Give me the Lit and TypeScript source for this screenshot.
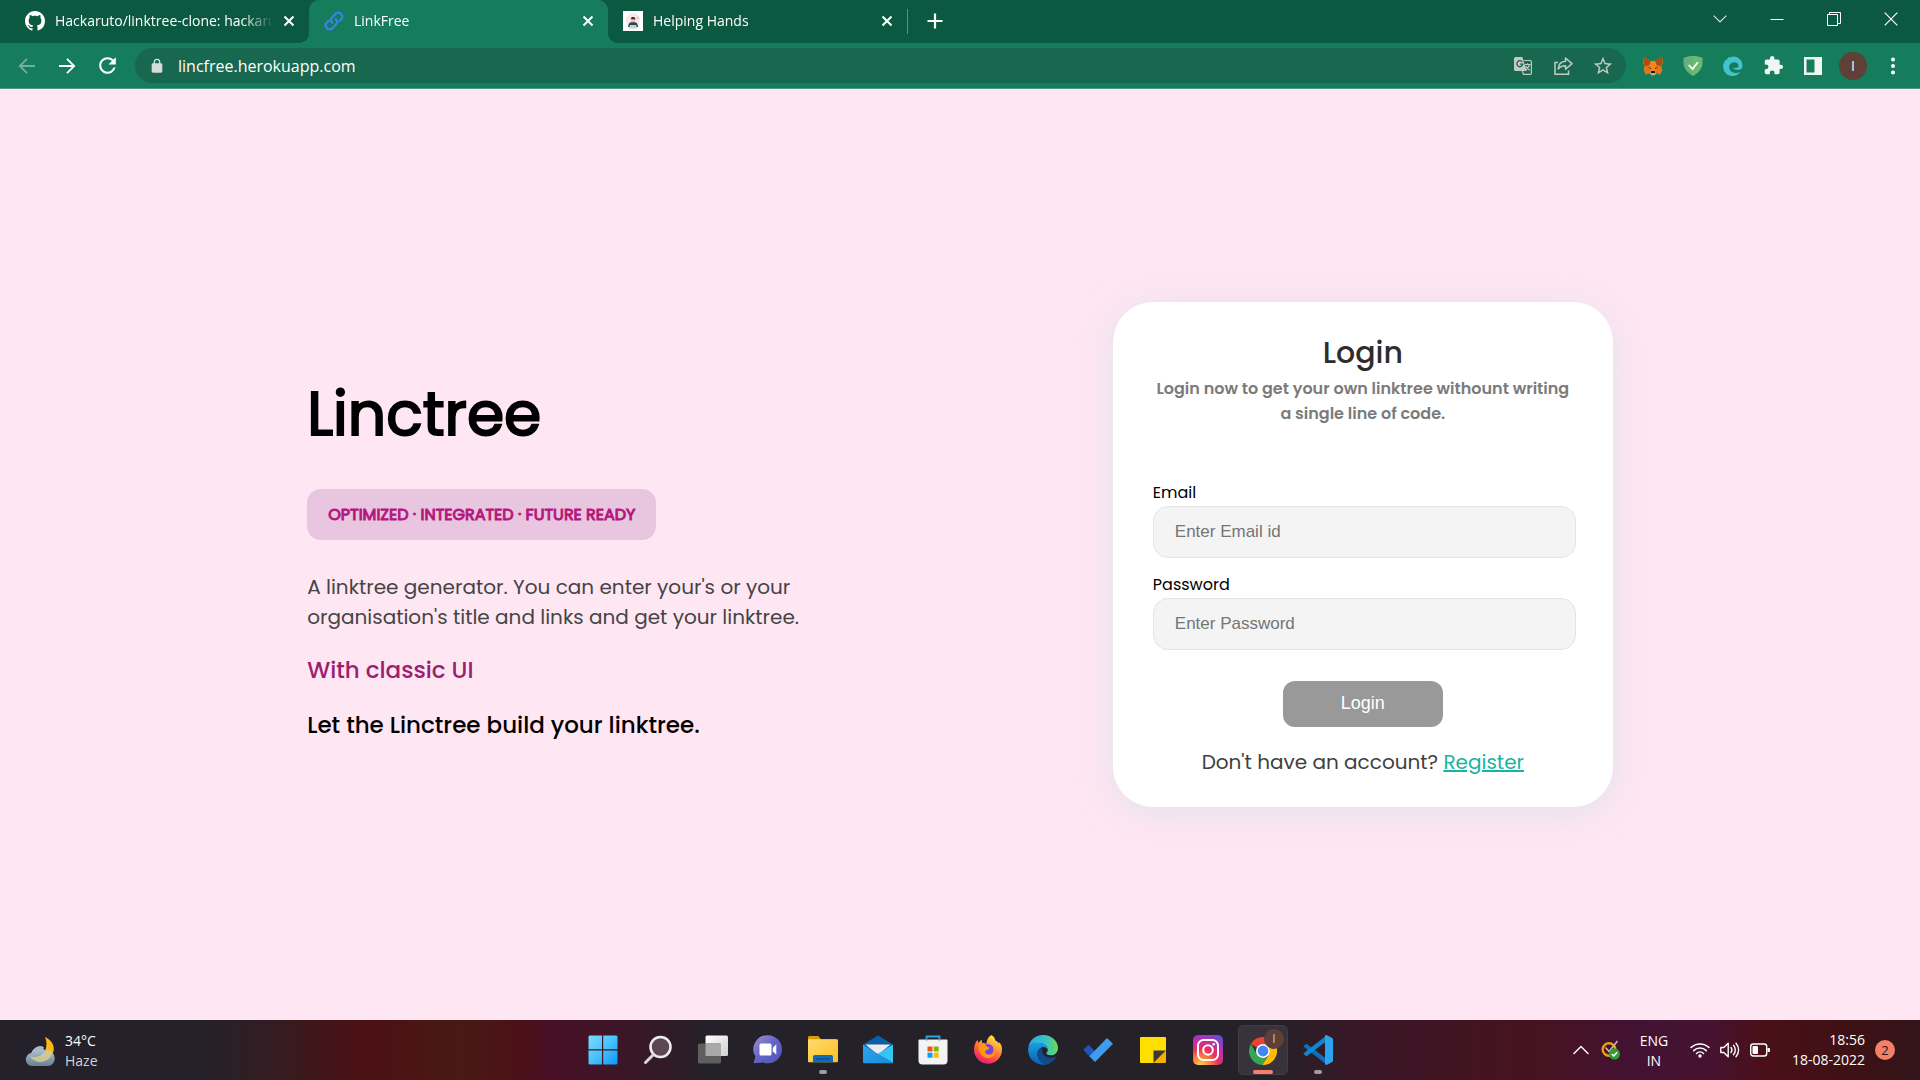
import { LitElement, html, svg, css, nothing, type TemplateResult } from "lit";
import { customElement, property } from "lit/decorators.js";
import { classMap } from "lit/directives/class-map.js";

const icon = (size: number, box: string, body: TemplateResult) =>
  html`<svg width=${size} height=${size} viewBox=${box} fill="none" aria-hidden="true">${body}</svg>`;

const controlReset = css`
  * {
    box-sizing: border-box;
  }
  button {
    display: flex;
    align-items: center;
    justify-content: center;
    margin: 0;
    padding: 0;
    border: 0;
    background: none;
    color: inherit;
    font: inherit;
  }
  svg {
    display: block;
    flex: none;
  }
`;

/* ---------- browser glyphs ---------- */

const githubIcon = icon(20, "0 0 16 16", svg`<path fill="#fff" d="M8 0C3.58 0 0 3.58 0 8c0 3.54 2.29 6.53 5.47 7.59.4.07.55-.17.55-.38 0-.19-.01-.82-.01-1.49-2.01.37-2.53-.49-2.69-.94-.09-.23-.48-.94-.82-1.13-.28-.15-.68-.52-.01-.53.63-.01 1.08.58 1.23.82.72 1.21 1.87.87 2.33.66.07-.52.28-.87.51-1.07-1.78-.2-3.64-.89-3.64-3.95 0-.87.31-1.59.82-2.15-.08-.2-.36-1.02.08-2.12 0 0 .67-.21 2.2.82.64-.18 1.32-.27 2-.27s1.36.09 2 .27c1.53-1.04 2.2-.82 2.2-.82.44 1.1.16 1.92.08 2.12.51.56.82 1.27.82 2.15 0 3.07-1.87 3.75-3.65 3.95.29.25.54.73.54 1.48 0 1.07-.01 1.93-.01 2.2 0 .21.15.46.55.38A8.01 8.01 0 0 0 16 8c0-4.42-3.58-8-8-8z"/>`);

const linkIcon = icon(20, "0 0 20 20", svg`<g stroke="#3b82e6" stroke-width="2.200" stroke-linecap="round" stroke-linejoin="round"><path d="M8.2 11.8a4 4 0 0 1 0-5.6l3.7-3.7a4 4 0 0 1 5.6 5.6l-2.2 2.2"/><path d="M11.8 8.2a4 4 0 0 1 0 5.6l-3.7 3.7a4 4 0 0 1-5.6-5.6l2.200-2.200"/></g>`);

const handsIcon = icon(20, "0 0 20 20", svg`<path fill="#fff" d="M0 0h20v20H0z"/><circle cx="10" cy="9" r="7" fill="#fbe6e4"/><path fill="#f2b9a6" d="M8.3 8h3.6v3.6H8.3z"/><path fill="#2b2b33" d="M7.8 8.6c0-2 1-2.6 2.3-2.6s2.3.7 2.2 2.4L8.6 8z"/><path fill="#264653" d="M5 16c.2-3 1.600-4.800 3.400-4.800h3.300c1.900 0 3.200 1.900 3.400 4.800h-2.300v-2H7.300v2z"/><path fill="#c9cfd6" d="M6.800 14h6.500l.5 3.600H6.200z"/><circle cx="14.500" cy="7" r=".8" fill="#a8b4c0"/>`);

const crossIcon = icon(12, "0 0 12 12", svg`<path stroke="#fff" stroke-width="2" d="m1.500 1.500 9 9m0-9-9 9"/>`);
const plusIcon = icon(16, "0 0 16 16", svg`<path stroke="#fff" stroke-width="2.200" d="M8 .5v15M.5 8h15"/>`);
const backIcon = icon(20, "0 0 20 20", svg`<path stroke="#73b09c" stroke-width="1.800" d="M18 10H3m7-7.200L2.800 10l7.200 7.200"/>`);
const forwardIcon = icon(20, "0 0 20 20", svg`<path stroke="#fff" stroke-width="1.800" d="M2 10h15m-7-7.200 7.200 7.200-7.200 7.200"/>`);
const reloadIcon = icon(25, "0 0 24 24", svg`<path fill="#fff" d="M17.650 6.350A7.950 7.950 0 0 0 12 4a8 8 0 1 0 7.730 10h-2.080A6 6 0 1 1 12 6c1.660 0 3.140.69 4.220 1.780L13 11h7V4z"/>`);
const lockIcon = icon(16, "0 0 24 24", svg`<path fill="#d5dcda" fill-rule="evenodd" d="M18 8h-1V6A5 5 0 0 0 7 6v2H6a2 2 0 0 0-2 2v10c0 1.100.9 2 2 2h12a2 2 0 0 0 2-2V10a2 2 0 0 0-2-2zM9 6a3 3 0 0 1 6 0v2H9z"/>`);

const translateIcon = icon(18, "0 0 18 18", svg`<path fill="#c3cac6" d="M1.500 0h6.800l4.500 14H1.500A1.500 1.500 0 0 1 0 12.500v-11A1.500 1.500 0 0 1 1.500 0z"/><path stroke="#18684f" stroke-width="1.300" d="M8.300 5A3 3 0 1 0 8.800 7.200H6"/><path stroke="#c3cac6" stroke-width="1.200" d="M10 3.500h6.300c.6 0 1.100.5 1.100 1.100v11.700c0 .6-.5 1.100-1.100 1.100H9.500L8.300 14M10.700 7.500h5.800M13.500 6.300v1.200m2 0c-.5 2.500-2 4.300-4 5.300m.3-3.800c.8 1.800 2 3 4 4.200"/>`);
const shareIcon = icon(19, "0 0 19 19", svg`<path stroke="#c3cac6" stroke-width="1.500" d="M4 6.500H1v11.700h13.500V14.500"/><path stroke="#c3cac6" stroke-width="1.500" stroke-linejoin="round" d="M11.500 2v3.300C7 5.500 4.500 8.500 4.200 13c1.800-2.400 4-3.400 7.300-3.300v3.500L18 7.600z"/>`);
const starIcon = icon(22, "0 0 24 24", svg`<path fill="#c3cac6" d="m22 9.240-7.190-.62L12 2 9.190 8.630 2 9.240l5.460 4.730L5.820 21 12 17.270 18.180 21l-1.630-7.030zM12 15.400l-3.760 2.270 1-4.280-3.320-2.880 4.380-.38L12 6.100l1.710 4.040 4.380.38-3.320 2.880 1 4.280z"/>`);

const foxIcon = icon(20, "0 0 20 20", svg`<path fill="#e2761b" d="M.8.8 8 5h4L19.200.8l.6 6-1.300 4 .9 3.300-2 4.400-4-.9-2 1.400H8.600l-2-1.400-4 .9-2-4.400.9-3.300-1.300-4z"/><path fill="#a94f16" d="M.8.8 8 5 6.400 9.300l-4.900.9-.6-3.500zM19.200.8 12 5l1.600 4.300 4.900.9.6-3.500z"/><path fill="#f6851b" d="m6.400 9.300 1.600-4.300h4l1.600 4.300-.8 3.500-.8 3H8l-.8-3z"/><path fill="#233447" d="m4.800 11.200 3 .5.300 1.500zM15.200 11.200l-3 .5-.3 1.500z"/><path fill="#c0ad9e" d="M7.600 15.300h4.800l.4 2.500-1.400 1.400H8.600l-1.400-1.400z"/><path fill="#161616" d="M8.300 15h3.400l.5 2H7.800z"/>`);
const guardIcon = icon(20, "0 0 20 20", svg`<path fill="#68bc71" d="M10 0c3 0 6.500.6 9.500 2v4.600C19.500 12 16 17 10 20z"/><path fill="#67b279" d="M10 0C7 0 3.500.6.5 2v4.600C.5 12 4 17 10 20z"/><path stroke="#fff" stroke-width="1.800" d="m5.800 9 3.700 4 5.300-6.800"/>`);
const swirlIcon = icon(20, "0 0 20 20", svg`<path fill="#42c3cd" d="M2 4.500 4.500 3 5 1.200l2 .2C12-1 18.800 2 19.500 9c.2 2-.5 3.400-1.700 4.200-2.600 1.700-6.800.5-8.800-1.700 2.800 1 5 .4 6.400-.6.6-3-1.700-4.700-4.400-4.600-3 .1-5 2.400-4.800 5.200.3 3.400 3.200 5.600 6.800 5.400 2-.2 3.200-.7 4.500-1.500-2 3.300-5 4.600-8.300 4.500C4.300 19.700.5 16 .3 11.400-.1 9.500.2 7.800 1 6.400z"/><path fill="#14795a" d="M8.500 10.200c1.300-1.700 3.500-2.200 5.300-1.300.5.300.7.900.3 1.200-1.300.9-3.700 1.200-5.600.1z"/>`);
const puzzleIcon = icon(21, "0 0 24 24", svg`<path fill="#f1f5f4" d="M20.500 11H19V7a2 2 0 0 0-2-2h-4V3.500a2.500 2.500 0 0 0-5 0V5H4a2 2 0 0 0-2 2v3.800h1.500a2.700 2.700 0 0 1 0 5.400H2V20c0 1.100.9 2 2 2h3.800v-1.500a2.700 2.700 0 0 1 5.400 0V22H17a2 2 0 0 0 2-2v-4h1.500a2.500 2.500 0 0 0 0-5z"/>`);
const panelIcon = icon(18, "0 0 18 18", svg`<path fill="#f1f5f4" fill-rule="evenodd" d="M0 0h18v18H0zm2.500 2.500v13h8v-13z"/>`);
const dotsIcon = icon(18, "0 0 18 18", svg`<g fill="#fff"><circle cx="9" cy="2.500" r="2"/><circle cx="9" cy="9" r="2"/><circle cx="9" cy="15.500" r="2"/></g>`);

const chevronDown = icon(14, "0 0 14 14", svg`<path stroke="#d7e4df" stroke-width="1.200" d="M.7 3.700 7 10l6.300-6.300"/>`);
const minimizeIcon = icon(14, "0 0 14 14", svg`<path stroke="#fff" d="M.5 7.500h13"/>`);
const restoreIcon = icon(14, "0 0 14 14", svg`<path stroke="#fff" d="M.5 2.500h10v11H.5zM2.500 2.500v-2h11v11h-3"/>`);
const windowClose = icon(14, "0 0 14 14", svg`<path stroke="#fff" stroke-width="1.200" d="m.7.700 12.600 12.600m0-12.600L.7 13.300"/>`);

interface Tab {
  title: string;
  glyph: TemplateResult;
  active?: boolean;
}

@customElement("browser-chrome")
export class BrowserChrome extends LitElement {
  private tabs: Tab[] = [
    { title: "Hackaruto/linktree-clone: hackaruto", glyph: githubIcon },
    { title: "LinkFree", glyph: linkIcon, active: true },
    { title: "Helping Hands", glyph: handsIcon },
  ];

  static styles = [
    controlReset,
    css`
      :host {
        display: block;
        color: #fff;
        background: #157c5c;
        border-bottom: 1px solid #4d9b83;
        font-family: "Segoe UI", "Open Sans", sans-serif;
      }
      .strip {
        display: flex;
        height: 43px;
        padding-left: 10px;
        background: #0b5940;
      }
      .tab {
        position: relative;
        display: flex;
        align-items: center;
        flex: 0 1 299px;
        min-width: 0;
        padding: 0 10px 2px 15px;
      }
      .tab.active {
        background: #157c5c;
        border-radius: 10px 10px 0 0;
      }
      .tab.active::before,
      .tab.active::after {
        content: "";
        position: absolute;
        bottom: 0;
        width: 10px;
        height: 10px;
      }
      .tab.active::before {
        right: 100%;
        background: radial-gradient(circle at 0 0, transparent 10px, #157c5c 10px);
      }
      .tab.active::after {
        left: 100%;
        background: radial-gradient(circle at 100% 0, transparent 10px, #157c5c 10px);
      }
      .pick {
        flex: 1;
        min-width: 0;
        gap: 10px;
        justify-content: flex-start;
      }
      .title {
        flex: 1;
        min-width: 0;
        overflow: hidden;
        white-space: nowrap;
        text-align: left;
        font-size: 14px;
        line-height: 20px;
        mask-image: linear-gradient(to right, #000 calc(100% - 32px), transparent);
      }
      .shut {
        width: 20px;
        height: 20px;
        margin-left: 5px;
      }
      .new {
        width: 54px;
        padding-bottom: 2px;
      }
      .rule {
        width: 1px;
        height: 25px;
        margin-top: 9px;
        background: #5d9180;
      }
      .windows {
        display: flex;
        margin-left: auto;
        padding-right: 1px;
      }
      .windows button {
        width: 57px;
        height: 37px;
      }
      .bar {
        display: flex;
        align-items: center;
        height: 45px;
        padding: 0 7px 0 7px;
      }
      .bar button {
        flex: none;
        width: 40px;
        height: 36px;
      }
      .address {
        display: flex;
        align-items: center;
        flex: 1;
        height: 35px;
        margin: 0 7px 0 8px;
        padding: 0 3px 0 14px;
        border-radius: 18px;
        background: #18684f;
      }
      .address input {
        flex: 1;
        min-width: 0;
        margin-left: 13px;
        padding: 0;
        border: 0;
        outline: 0;
        background: none;
        color: #fff;
        font: inherit;
        font-size: 16px;
      }
      .avatar {
        display: grid;
        place-items: center;
        width: 28px;
        height: 28px;
        border-radius: 50%;
        background: #5d4037;
        font-size: 14px;
      }
    `,
  ];

  render() {
    return html`
      <div class="strip">
        ${this.tabs.map(
          (tab) => html`
            <div class=${classMap({ tab: true, active: !!tab.active })}>
              <button class="pick">${tab.glyph}<span class="title">${tab.title}</span></button>
              <button class="shut" aria-label="Close tab">${crossIcon}</button>
            </div>
          `
        )}
        <span class="rule"></span>
        <button class="new" aria-label="New tab">${plusIcon}</button>
        <div class="windows">
          <button aria-label="Search tabs">${chevronDown}</button>
          <button aria-label="Minimize">${minimizeIcon}</button>
          <button aria-label="Restore">${restoreIcon}</button>
          <button aria-label="Close">${windowClose}</button>
        </div>
      </div>
      <div class="bar">
        <button aria-label="Back">${backIcon}</button>
        <button aria-label="Forward">${forwardIcon}</button>
        <button aria-label="Reload">${reloadIcon}</button>
        <div class="address">
          ${lockIcon}
          <input type="text" aria-label="Address" .value=${"lincfree.herokuapp.com"} />
          <button aria-label="Translate">${translateIcon}</button>
          <button aria-label="Share">${shareIcon}</button>
          <button aria-label="Bookmark">${starIcon}</button>
        </div>
        <button aria-label="Wallet">${foxIcon}</button>
        <button aria-label="Ad blocker">${guardIcon}</button>
        <button aria-label="Eno">${swirlIcon}</button>
        <button aria-label="Extensions">${puzzleIcon}</button>
        <button aria-label="Side panel">${panelIcon}</button>
        <button aria-label="Profile"><span class="avatar">I</span></button>
        <button aria-label="Menu">${dotsIcon}</button>
      </div>
    `;
  }
}

/* ---------- page ---------- */

@customElement("login-card")
export class LoginCard extends LitElement {
  static styles = css`
    * {
      box-sizing: border-box;
    }
    :host {
      box-sizing: border-box;
      display: block;
      flex: 0 1 500px;
      padding: 28px 40px 30px;
      border-radius: 40px;
      background: #fff;
      box-shadow: 0 5px 35px rgba(196, 226, 232, 0.5);
      text-align: center;
    }
    h2 {
      margin: 0;
      color: #2d2d2d;
      font-size: 30px;
      font-weight: 500;
      line-height: 46px;
    }
    .lead {
      margin: 0 0 54px;
      color: #7b7b7b;
      font-size: 16px;
      font-weight: 600;
      line-height: 25px;
    }
    .field {
      display: flex;
      flex-direction: column;
      margin: 0 -3px 14px 0;
      text-align: left;
    }
    label {
      color: #000;
      font-size: 16px;
      font-weight: 400;
      line-height: 26px;
    }
    input {
      width: 100%;
      height: 52px;
      padding: 0 21px;
      border: 1px solid #e4e4e4;
      border-radius: 15px;
      outline: 0;
      background: #f4f4f4;
      font-family: Arial, "Liberation Sans", sans-serif;
      font-size: 17px;
    }
    input::placeholder {
      color: #757575;
      opacity: 1;
    }
    .submit {
      width: 160px;
      height: 46px;
      margin: 17px auto 20px;
      padding: 0 0 2px;
      border: 0;
      border-radius: 12px;
      background: #999;
      color: #fff;
      font-family: Arial, "Liberation Sans", sans-serif;
      font-size: 18px;
    }
    .more {
      margin: 0;
      color: #404040;
      font-size: 20px;
      font-weight: 400;
      line-height: 30px;
    }
    a {
      color: #1ab3a0;
      text-decoration-thickness: 2px;
    }
  `;

  render() {
    return html`
      <h2>Login</h2>
      <p class="lead">Login now to get your own linktree withount writing a single line of code.</p>
      <form @submit=${(e: Event) => e.preventDefault()}>
        <div class="field">
          <label for="email">Email</label>
          <input id="email" type="email" placeholder="Enter Email id" />
        </div>
        <div class="field">
          <label for="password">Password</label>
          <input id="password" type="password" placeholder="Enter Password" />
        </div>
        <button class="submit">Login</button>
      </form>
      <p class="more">Don't have an account? <a href="#register">Register</a></p>
    `;
  }
}

@customElement("landing-page")
export class LandingPage extends LitElement {
  static styles = css`
    :host {
      display: flex;
      align-items: center;
      justify-content: space-between;
      gap: 40px;
      flex: 1;
      padding: 0 16%;
      background: #ffe6f3;
      font-family: Poppins, Inter, sans-serif;
      font-weight: 400;
    }
    .intro {
      flex: 0 1 500px;
      padding-top: 2px;
    }
    h1 {
      margin: 0 0 29px;
      color: #000;
      font-size: 60px;
      font-weight: 400;
      line-height: 92px;
      -webkit-text-stroke: 2px #000;
    }
    .badge {
      display: inline-block;
      padding: 13px 21px;
      border-radius: 14px;
      background: #e8c6df;
      color: #b5177e;
      font-size: 16px;
      font-weight: 400;
      line-height: 25px;
      -webkit-text-stroke: 1px currentColor;
    }
    .about {
      margin: 32px 0 20px;
      color: #444;
      font-size: 20px;
      line-height: 30px;
    }
    h3 {
      margin: 0 0 19px;
      color: #000;
      font-size: 23px;
      font-weight: 500;
      line-height: 36px;
    }
    h3.accent {
      color: #9c2070;
    }
    h3:last-child {
      margin: 0;
    }
  `;

  render() {
    return html`
      <section class="intro">
        <h1>Linctree</h1>
        <span class="badge">OPTIMIZED · INTEGRATED · FUTURE READY</span>
        <p class="about">A linktree generator. You can enter your's or your organisation's title and links and get your linktree.</p>
        <h3 class="accent">With classic UI</h3>
        <h3>Let the Linctree build your linktree.</h3>
      </section>
      <login-card></login-card>
    `;
  }
}

/* ---------- taskbar ---------- */

const app = (body: TemplateResult) => icon(30, "0 0 30 30", body);

const weatherIcon = app(svg`<defs><linearGradient id="w-cloud" x2="0" y2="1"><stop stop-color="#b9cbdc"/><stop offset="1" stop-color="#6b7f92"/></linearGradient></defs><path fill="#fdb913" d="M20 1c7 3 10.500 9.500 8 16-2.500 6.500-9.500 10-16 8.300-3-.8-5-2.300-7-4.600 7 1.500 13-1 15.400-6.800C22 9.500 21.800 5.500 20 1z"/><path fill="url(#w-cloud)" d="M7 30a6.500 6.500 0 0 1-.8-12.900A8 8 0 0 1 20.500 15c5-1 9.200 2.500 9.200 7.500 0 4-3 7.500-7 7.500z"/><path fill="#d9cf8d" opacity=".8" d="M5 20.500c7 1.500 13-1 15.400-6.100 3-.4 5.600.8 7.200 2.600-2.500 6.500-9 10.500-15.600 8.500-3-.8-5-2.500-7-5z"/><path fill="#a7b9ca" d="M8.500 17A6.500 6.500 0 0 1 19 11.500c-1.500 3.700-5 6-10.500 5.500z"/>`);
const startIcon = app(svg`<defs><linearGradient id="s-blue" x1="0" y1="0" x2="30" y2="30" gradientUnits="userSpaceOnUse"><stop stop-color="#7ddcff"/><stop offset=".5" stop-color="#48c2fb"/><stop offset="1" stop-color="#0a96fa"/></linearGradient></defs><path fill="url(#s-blue)" d="M1.500.5H14v13.700H.5V1.500zM15.200.5h13.300l1 1v12.700H15.200zM.5 15.400H14v14.100H1.500l-1-1zM15.200 15.400h14.300v13.100l-1 1H15.200z"/>`);
const searchIcon = app(svg`<circle cx="17.500" cy="12" r="10" fill="#5b4750" stroke="#ececec" stroke-width="2.600"/><path stroke="#d7d7d7" stroke-width="3" stroke-linecap="round" d="m10 20-7.500 7.500"/>`);
const viewsIcon = app(svg`<defs><linearGradient id="v-front" x2="1" y2="1"><stop stop-color="#fff"/><stop offset="1" stop-color="#d0d0d0"/></linearGradient></defs><rect x="7.500" y=".5" width="22.500" height="20.500" rx="1.500" fill="url(#v-front)"/><rect y="8.500" width="23" height="20" rx="1.500" fill="#5f5f5f"/><path fill="#a9a9a9" d="M7.500 8.500H23V21H7.500z"/>`);
const chatIcon = app(svg`<defs><linearGradient id="c-bg" x2="1" y2="1"><stop stop-color="#a08fd0"/><stop offset=".5" stop-color="#6264c7"/><stop offset="1" stop-color="#4f52b8"/></linearGradient></defs><path fill="url(#c-bg)" d="M15 .3a14 14 0 1 1-5 27.100L1.500 28.300c-.8 0-1-.7-.7-1.200l1.700-5.300A14 14 0 0 1 15 .3z"/><rect x="6.500" y="8.500" width="12" height="12" rx="1.500" fill="#fff"/><path fill="#fff" d="m19.800 12.800 3.500-3.600v10.600l-3.500-3.600z"/>`);
const folderIcon = app(svg`<defs><linearGradient id="f-bg" x2="1" y2="1"><stop stop-color="#ffdb6e"/><stop offset="1" stop-color="#fbbf24"/></linearGradient></defs><path fill="#dd9a06" d="M0 2.500C0 1.700.7 1 1.500 1h8.800l2.700 3.200H28V10H0z"/><rect y="4.300" width="30" height="23" rx="1" fill="url(#f-bg)"/><path fill="#0f6cbd" d="M5 27.300v-5.500C5 20.800 5.800 20 6.800 20h16.400c1 0 1.800.8 1.800 1.800v5.500z"/><path stroke="#0b4a8b" stroke-width="1.200" stroke-linecap="round" d="M8.500 23.800h13"/>`);
const mailIcon = app(svg`<defs><linearGradient id="m-bg" x2="1" y2="1"><stop stop-color="#2ba8ea"/><stop offset="1" stop-color="#1a88dc"/></linearGradient></defs><path fill="#0d5ea8" d="m0 9.500 15-9 15 9-6 4H6z"/><path fill="#ececec" d="M2.500 9.500h25L15 20z"/><path fill="#35c5f4" d="M30 9.500V28L14.500 19z"/><path fill="url(#m-bg)" d="M0 9.500 30 28.300H1.200A1.200 1.200 0 0 1 0 27z"/>`);
const storeIcon = app(svg`<path fill="#f3f3f3" d="M.5 5.500c0-.6.4-1 1-1h27c.6 0 1 .4 1 1v20a4 4 0 0 1-4 4h-21a4 4 0 0 1-4-4z"/><path stroke="#2fa4e2" stroke-width="1.800" d="M8.500 5.500v-4h13v4"/><path fill="#f25022" d="M9.500 11.500h5v5h-5z"/><path fill="#7fba00" d="M15.700 11.500h5v5h-5z"/><path fill="#00a4ef" d="M9.500 17.700h5v5h-5z"/><path fill="#ffb900" d="M15.700 17.700h5v5h-5z"/>`);
const firefoxIcon = app(svg`<defs><linearGradient id="ff-bg" x1=".8" x2=".3" y2="1"><stop stop-color="#fff44f"/><stop offset=".35" stop-color="#ffa436"/><stop offset=".7" stop-color="#ff4f3f"/><stop offset="1" stop-color="#e31587"/></linearGradient></defs><path fill="url(#ff-bg)" d="M18.500 0c2.500 1.500 3.600 3.500 3.800 5.500 1.500.3 2.600 1.500 3.200 3 .3-.8.200-1.500.2-1.500C28.500 9 29 12 29 14.500a14 14 0 0 1-28 .3C1 11 2.300 7.500 4.500 4.800L5.300 8 8.500 4.500 9.300 8c1.800-.3 3 .2 4 1 .5-4.500 2-7 5.200-9z"/><circle cx="14.800" cy="14.500" r="5.600" fill="#7543e0"/><path fill="#ff980e" d="M5.500 11c2-1.500 5.500-2 7.500-.5 1 .8 1.500 2 3.500 2-.5 2-2.200 2.200-4 3-1 1.500.5 4 3.500 4.300 3 .3 5-1.800 6-3.800.5 4-3 7.500-7.500 7-5-.5-9.500-5-9-12z"/>`);
const edgeIcon = app(svg`<defs><linearGradient id="e-top" x2="1"><stop stop-color="#2aa8e0"/><stop offset=".55" stop-color="#35c1d0"/><stop offset="1" stop-color="#66dc50"/></linearGradient><linearGradient id="e-low" x2="0" y2="1"><stop stop-color="#1b9de2"/><stop offset="1" stop-color="#0f5fae"/></linearGradient></defs><path fill="url(#e-top)" d="M.3 12.500C1.500 5 7.500 0 15 0c9 0 15 6.500 15 13 0 4.500-3.200 7.300-7 7.300-3.500 0-5-1.300-4.500-2.500.8-1 1.500-1.800 1.200-3.600C19 10 14.500 8 10 8 5 8 1.500 10 .3 12.500z"/><path fill="url(#e-low)" d="M.1 14C.8 10 4.600 7.800 9.800 7.800c5 0 9.600 2.600 9.900 6.800-1-1.800-3-2.600-5-2.600C10 14 9 17 9.500 20c.7 5 5 9 10.500 9A15 15 0 0 1 .1 14z"/><path fill="#114a8b" d="M14.500 12c-4 1-6 5-4.800 9.500C11.200 27 16 30 19.800 29.200c3.500-1.200 6.500-3.500 8.200-6.900.2-.5-.2-.7-.6-.5-4.400 2-10 .7-12.200-2.600-1.500-2.300-1.500-5.500-.7-7.200z"/>`);
const todoIcon = app(svg`<path fill="#1b57b8" d="m.3 14.700 5.200-5 7 7-5.300 5.600z"/><path fill="#3f9df0" d="m24 3 6 5.700-18 18.300-5.700-5.700z"/>`);
const notesIcon = app(svg`<path fill="#ffdf00" d="M3 2h24a1 1 0 0 1 1 1v13L16 28H3a1 1 0 0 1-1-1V3a1 1 0 0 1 1-1z"/><path fill="#3a3a3d" d="M15.500 15.500H28L15.500 28z"/><path fill="#f2b200" d="M28 15.500V27a1 1 0 0 1-1 1H15.500z"/>`);
const instaIcon = app(svg`<defs><radialGradient id="i-bg" cx=".25" cy="1.050" r="1.200"><stop stop-color="#ffd95c"/><stop offset=".25" stop-color="#fb8a3a"/><stop offset=".5" stop-color="#e8305f"/><stop offset=".75" stop-color="#b92fae"/><stop offset="1" stop-color="#5a4fd8"/></radialGradient></defs><rect width="30" height="30" rx="5" fill="url(#i-bg)"/><rect x="5" y="5" width="20" height="20" rx="5.500" stroke="#fff" stroke-width="2"/><circle cx="15" cy="15" r="4.800" stroke="#fff" stroke-width="2"/><circle cx="20.700" cy="9.300" r="1.300" fill="#fff"/>`);
const chromeIcon = app(svg`<g transform="translate(1 2)"><path fill="#ea4335" d="M14 0a14 14 0 0 1 12.100 7H14a7 7 0 0 0-6.060 3.500L1.880 7A14 14 0 0 1 14 0z"/><path fill="#fbbc05" d="M26.100 7A14 14 0 0 1 13 28l7.060-10.500A7 7 0 0 0 14 7z"/><path fill="#34a853" d="M1.880 7 7.940 17.500A7 7 0 0 0 17.500 20L13.500 28A14 14 0 0 1 1.880 7z"/><circle cx="14" cy="14" r="7" fill="#fff"/><circle cx="14" cy="14" r="5.400" fill="#4285f4"/></g>`);
const codeIcon = app(svg`<path fill="#0c6fb8" d="m.3 11.500 2.500-2.300c.5-.4 1-.4 1.500 0L25 25v4.500L21.500 28z"/><path fill="#0f86d0" d="m.3 18.500 2.500 2.300c.5.4 1 .4 1.500 0L25 5V.5L21.500 2z"/><path fill="#2ba3ef" d="M22 .3c.6-.4 1.200-.3 1.800 0l5 2.400c.7.400 1.200 1 1.200 1.800v21c0 .8-.5 1.500-1.200 1.800l-5 2.400c-.6.3-1.300.2-1.800-.3z"/>`);

const chevronUp = icon(16, "0 0 16 16", svg`<path stroke="#fff" stroke-width="1.400" d="M.5 12 8 4.500l7.500 7.500"/>`);
const safeIcon = icon(20, "0 0 20 20", svg`<circle cx="8" cy="9.500" r="6.300" stroke="#e3a21c" stroke-width="2.400"/><path stroke="#cdb9a0" stroke-width="1.600" d="M4.500 7.500 8 11.500 16.500 1"/><circle cx="13.500" cy="14" r="5.500" fill="#2f9e3a"/><path stroke="#fff" stroke-width="1.500" d="m10.800 14 2 2 3.400-3.800"/>`);
const wifiIcon = icon(20, "0 0 20 20", svg`<g stroke="#fff" stroke-width="1.500" stroke-linecap="round"><path d="M1 7.500a13 13 0 0 1 18 0M3.700 10.600a9 9 0 0 1 12.600 0M6.500 13.500a5 5 0 0 1 7 0"/></g><circle cx="10" cy="16" r="1.700" fill="#fff"/>`);
const soundIcon = icon(20, "0 0 20 20", svg`<g stroke="#fff" stroke-width="1.400" stroke-linecap="round" stroke-linejoin="round"><path d="M.8 7.500h3L8.200 3.300v13.400L3.800 12.500h-3zM11 7.500a4 4 0 0 1 0 5M13.500 5.300a7 7 0 0 1 0 9.400M16 3.300a10 10 0 0 1 0 13.400"/></g>`);
const batteryIcon = icon(20, "0 0 20 20", svg`<rect x=".7" y="4" width="16" height="12" rx="2.500" stroke="#fff" stroke-width="1.400"/><rect x="2.500" y="6" width="5.500" height="8" rx="1" fill="#fff"/><path fill="#fff" d="M17.500 8H19c.5 0 1 .5 1 1v2c0 .5-.5 1-1 1h-1.500z"/>`);

interface TaskApp {
  name: string;
  glyph: TemplateResult;
  state?: "open" | "current";
  badge?: string;
}

@customElement("task-bar")
export class TaskBar extends LitElement {
  @property({ type: Number }) notifications = 2;

  private apps: TaskApp[] = [
    { name: "Start", glyph: startIcon },
    { name: "Search", glyph: searchIcon },
    { name: "Task view", glyph: viewsIcon },
    { name: "Chat", glyph: chatIcon },
    { name: "File Explorer", glyph: folderIcon, state: "open" },
    { name: "Mail", glyph: mailIcon },
    { name: "Store", glyph: storeIcon },
    { name: "Firefox", glyph: firefoxIcon },
    { name: "Edge", glyph: edgeIcon },
    { name: "To Do", glyph: todoIcon },
    { name: "Sticky Notes", glyph: notesIcon },
    { name: "Instagram", glyph: instaIcon },
    { name: "Chrome", glyph: chromeIcon, state: "current", badge: "I" },
    { name: "Visual Studio Code", glyph: codeIcon, state: "open" },
  ];

  static styles = [
    controlReset,
    css`
      :host {
        display: grid;
        grid-template-columns: 1fr auto 1fr;
        align-items: center;
        height: 60px;
        color: #fff;
        font-family: "Segoe UI", "Open Sans", sans-serif;
        font-size: 14px;
        line-height: 20px;
        background: linear-gradient(
          to right,
          #24212a 0%,
          #24212a 10%,
          #331d22 14%,
          #4c1014 19%,
          #481a14 24%,
          #4c1118 27%,
          #471027 29%,
          #3a1726 33%,
          #242129 37%,
          #242129 66%,
          #3a1726 71%,
          #481220 80%,
          #431233 85%,
          #461230 89%,
          #4a1018 92%,
          #3e1115 96%,
          #33141a 100%
        );
      }
      .weather {
        justify-self: start;
        gap: 10px;
        padding: 2px 0 0 25px;
        text-align: left;
      }
      .lines {
        display: flex;
        flex-direction: column;
      }
      .muted {
        color: #d5d2d5;
      }
      .apps {
        display: flex;
      }
      .app {
        position: relative;
        width: 55px;
        height: 60px;
      }
      .tile {
        display: grid;
        place-items: center;
        width: 50px;
        height: 50px;
        border: 1px solid transparent;
        border-radius: 5px;
      }
      .current .tile {
        border-color: #433c46;
        background: #39323c;
      }
      .open::after,
      .current::after {
        content: "";
        position: absolute;
        bottom: 6px;
        left: 50%;
        width: 8px;
        height: 4px;
        border-radius: 2px;
        background: #a09aa2;
        transform: translateX(-50%);
      }
      .current::after {
        width: 20px;
        background: #f4806a;
      }
      .mark {
        position: absolute;
        top: 9px;
        right: 6px;
        display: grid;
        place-items: center;
        width: 20px;
        height: 20px;
        border-radius: 50%;
        background: #5d4037;
        color: #cfc4c0;
        font-size: 12px;
      }
      .tray {
        display: flex;
        align-items: center;
        justify-self: end;
        padding-right: 25px;
      }
      .lang {
        width: 48px;
        margin: 0 12px 0 4px;
        padding-top: 2px;
        text-align: center;
      }
      .small {
        width: 30px;
        height: 40px;
      }
      .status {
        gap: 10px;
      }
      .clock {
        margin: 0 10px 0 22px;
        text-align: right;
      }
      .count {
        display: grid;
        place-items: center;
        width: 20px;
        height: 20px;
        border-radius: 50%;
        background: #f4806a;
        color: #2a1414;
        font-size: 13px;
      }
    `,
  ];

  render() {
    return html`
      <button class="weather">
        ${weatherIcon}
        <span class="lines"><span>34°C</span><span class="muted">Haze</span></span>
      </button>
      <nav class="apps">
        ${this.apps.map(
          (a) => html`
            <button class="app ${a.state ?? ""}" aria-label=${a.name}>
              <span class="tile">${a.glyph}</span>
              ${a.badge ? html`<span class="mark">${a.badge}</span>` : nothing}
            </button>
          `
        )}
      </nav>
      <div class="tray">
        <button class="small" aria-label="Hidden icons">${chevronUp}</button>
        <button class="small" aria-label="Security">${safeIcon}</button>
        <button class="lang"><span class="lines"><span>ENG</span><span>IN</span></span></button>
        <button class="status" aria-label="Quick settings">${wifiIcon}${soundIcon}${batteryIcon}</button>
        <button class="clock"><span class="lines"><span>18:56</span><span>18-08-2022</span></span></button>
        <button class="count">${this.notifications}</button>
      </div>
    `;
  }
}

@customElement("app-root")
export class AppRoot extends LitElement {
  static styles = css`
    :host {
      display: flex;
      flex-direction: column;
      min-height: 100vh;
    }
  `;

  render() {
    return html`
      <browser-chrome></browser-chrome>
      <landing-page></landing-page>
      <task-bar></task-bar>
    `;
  }
}
